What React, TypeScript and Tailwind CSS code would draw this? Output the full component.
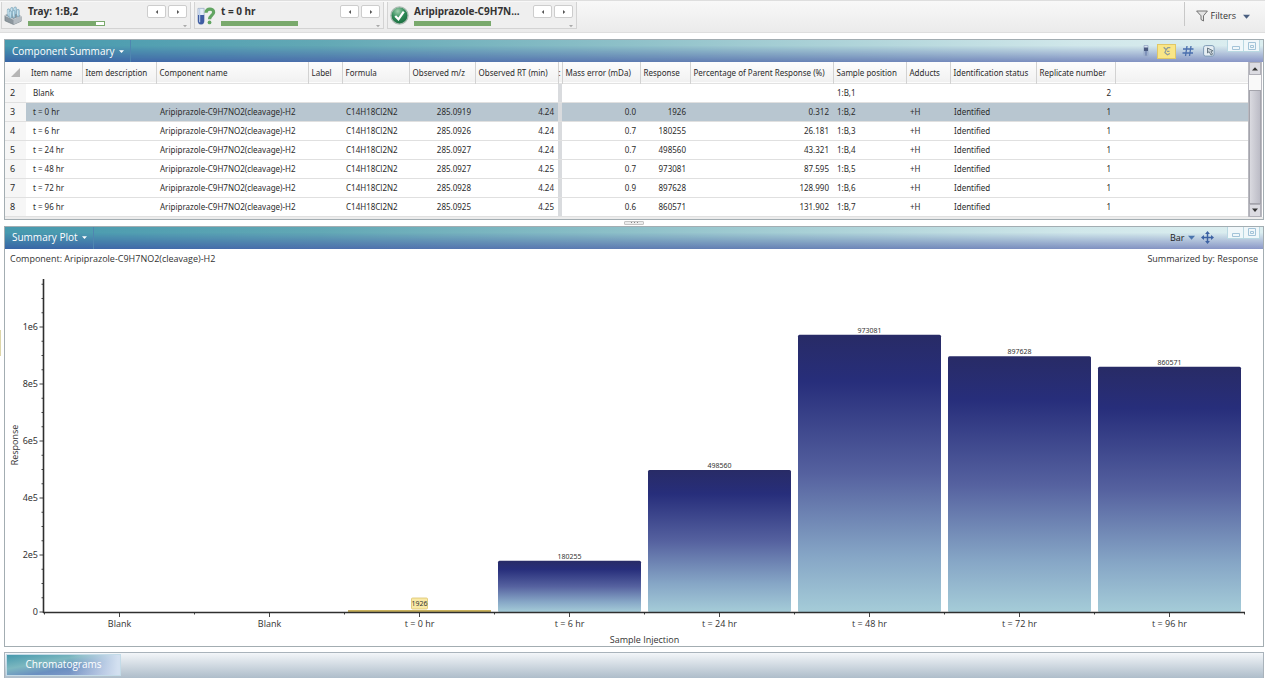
import type { ReactNode } from "react";

const CELL = "overflow-visible whitespace-nowrap";

type Column = { label: string; width: string; align?: "right" };

const COLUMNS: Column[] = [
  { label: "Item name", width: "w-[56px]" },
  { label: "Item description", width: "w-[74px]" },
  { label: "Component name", width: "w-[152px]" },
  { label: "Label", width: "w-[34px]" },
  { label: "Formula", width: "w-[67px]" },
  { label: "Observed m/z", width: "w-[66px]", align: "right" },
  { label: "Observed RT (min)", width: "w-[83px]", align: "right" },
  { label: "", width: "w-[4px]" },
  { label: "Mass error (mDa)", width: "w-[78px]", align: "right" },
  { label: "Response", width: "w-[50px]", align: "right" },
  { label: "Percentage of Parent Response (%)", width: "w-[143px]", align: "right" },
  { label: "Sample position", width: "w-[73px]" },
  { label: "Adducts", width: "w-[44px]" },
  { label: "Identification status", width: "w-[86px]" },
  { label: "Replicate number", width: "w-[79px]", align: "right" },
];

const COMPONENT = "Aripiprazole-C9H7NO2(cleavage)-H2";
const FORMULA = "C14H18Cl2N2";

const found = (item: string, mz: string, rt: string, err: string, resp: string, pct: string, pos: string) => [
  item, "", COMPONENT, "", FORMULA, mz, rt, "", err, resp, pct, pos, "+H", "Identified", "1",
];

const ROWS = [
  { id: 2, cells: ["Blank", "", "", "", "", "", "", "", "", "", "", "1:B,1", "", "", "2"] },
  { id: 3, selected: true, cells: found("t = 0 hr", "285.0919", "4.24", "0.0", "1926", "0.312", "1:B,2") },
  { id: 4, cells: found("t = 6 hr", "285.0926", "4.24", "0.7", "180255", "26.181", "1:B,3") },
  { id: 5, cells: found("t = 24 hr", "285.0927", "4.24", "0.7", "498560", "43.321", "1:B,4") },
  { id: 6, cells: found("t = 48 hr", "285.0927", "4.25", "0.7", "973081", "87.595", "1:B,5") },
  { id: 7, cells: found("t = 72 hr", "285.0928", "4.24", "0.9", "897628", "128.990", "1:B,6") },
  { id: 8, cells: found("t = 96 hr", "285.0925", "4.25", "0.6", "860571", "131.902", "1:B,7") },
];

const BARS = [
  { label: "Blank", value: 0 },
  { label: "Blank", value: 0 },
  { label: "t = 0 hr", value: 1926 },
  { label: "t = 6 hr", value: 180255 },
  { label: "t = 24 hr", value: 498560 },
  { label: "t = 48 hr", value: 973081 },
  { label: "t = 72 hr", value: 897628 },
  { label: "t = 96 hr", value: 860571 },
];

function TrayIcon() {
  return (
    <svg viewBox="0 0 20 20" className="size-[19px] shrink-0" aria-hidden="true">
      <path d="M1 10 9 7l9 4v5l-8 3.500L1 15.500z" fill="#8d979e" stroke="#6d787f" strokeWidth=".7" />
      <path d="M1 10l9 4 8-3" fill="none" stroke="#d4dade" strokeWidth="1" />
      <path d="M10 14v5.500l8-3.500v-5z" fill="#b4bcc2" />
      {[[3.5, 3], [7, 1.5], [10.5, 1], [13.5, 3.5], [9, 4.5], [5.5, 5]].map(([x, y]) => (
        <g key={`${x}-${y}`}>
          <rect x={x} y={y} width="2.600" height="8" rx="1.200" fill="#a9d0e2" stroke="#6b93a8" strokeWidth=".5" />
          <path d={`M${x + 0.8} ${y + 1.2}v5`} stroke="#e8f5fa" strokeWidth=".7" />
        </g>
      ))}
    </svg>
  );
}

function VialIcon() {
  return (
    <svg viewBox="0 0 20 20" className="size-[19px] shrink-0" aria-hidden="true">
      <path d="M1 2.500h6.500V16a3.200 3.200 0 0 1-6.500 0z" fill="#e3ecf6" stroke="#9dadc6" strokeWidth=".8" />
      <path d="M1 9.500h6.500V16a3.200 3.200 0 0 1-6.500 0z" fill="#3f5ca3" />
      <path d="M2.800 3v14" fill="none" stroke="#b9cdea" strokeWidth="1.200" />
      <path d="M9.500 7C9.500 2 17.500 2 17.500 6.500c0 3.300-4.300 3.500-4.300 7.500" fill="none" stroke="#62a562" strokeWidth="3.400" />
      <circle cx="13.200" cy="17.300" r="2" fill="#62a562" />
    </svg>
  );
}

function CheckIcon() {
  return (
    <svg viewBox="0 0 20 20" className="size-[19px] shrink-0" aria-hidden="true">
      <defs>
        <radialGradient id="check-fill" cx=".4" cy=".25" r=".8">
          <stop offset="0" stopColor="#9fd0ae" />
          <stop offset=".5" stopColor="#2f8a57" />
          <stop offset="1" stopColor="#176a3c" />
        </radialGradient>
      </defs>
      <circle cx="10" cy="10" r="9" fill="url(#check-fill)" stroke="#a9bab0" strokeWidth="1.400" />
      <path d="M5.500 10.500l3.400 3.500L14.500 6" fill="none" stroke="#fff" strokeWidth="2.400" />
    </svg>
  );
}

function Caret({ className, dir = "down" }: { className: string; dir?: "down" | "up" | "left" | "right" }) {
  const shapes = { down: "M0 2h8l-4 4.500z", up: "M0 6h8L4 1.500z", left: "M6 0v8L1.500 4z", right: "M2 0v8l4.500-4z" };
  return (
    <svg viewBox="0 0 8 8" className={className} fill="currentColor" aria-hidden="true">
      <path d={shapes[dir]} />
    </svg>
  );
}

function Stepper({ icon, title, filled }: { icon: ReactNode; title: string; filled: string }) {
  return (
    <section className="flex h-[27px] w-[190px] items-start border border-t-0 border-[#d3d3d3] bg-[#efefef] pr-[3px] pl-[2px]">
      <div className="pt-[4px]">{icon}</div>
      <div className="ml-[5px] flex min-w-0 flex-1 flex-col">
        <h2 className="h-[19px] text-[10px] leading-[19px] font-bold whitespace-nowrap text-[#333]">{title}</h2>
        <div className="h-[5px] w-[77px] border border-[#79a96c] bg-white">
          <div className={`h-full bg-[#79a96c] ${filled}`} />
        </div>
      </div>
      <div className="flex flex-col items-end">
        <div className="flex gap-[2px] pt-[3px]">
          {(["left", "right"] as const).map((dir) => (
            <button
              key={dir}
              type="button"
              aria-label={dir === "left" ? "Previous" : "Next"}
              className="flex h-[13px] w-[19px] items-center justify-center rounded-[2px] border border-[#cdcdcd] bg-white text-[#555]"
            >
              <Caret dir={dir} className="size-[4px]" />
            </button>
          ))}
        </div>
        <Caret className="mt-[6px] size-[4px] text-[#aaa]" />
      </div>
    </section>
  );
}

function WindowButtons() {
  return (
    <div className="mr-[3px] flex self-start text-[#a3c3d8]">
      <button type="button" aria-label="Minimize" className="flex h-[12px] w-[17px] items-end justify-center border border-t-0 border-[#b9d8e2] bg-[#f0f7fa]">
        <svg viewBox="0 0 8 8" className="size-[8px]" fill="none" stroke="currentColor" aria-hidden="true">
          <path d="M.5 3.500h7v3h-7z" />
        </svg>
      </button>
      <button type="button" aria-label="Maximize" className="flex h-[12px] w-[16px] items-center justify-center border border-t-0 border-l-0 border-[#b9d8e2] bg-[#f0f7fa]">
        <svg viewBox="0 0 8 8" className="size-[8px]" fill="none" stroke="currentColor" aria-hidden="true">
          <path d="M.5.5h7v7h-7zM2.500 3.500h3v2h-3z" />
        </svg>
      </button>
    </div>
  );
}

function PanelHeader({ title, children }: { title: string; children: ReactNode }) {
  return (
    <header className="relative isolate flex h-[22px] items-center bg-[linear-gradient(to_right,#3865a6,#4c6fac_25%,#6580b4_60%,#8c99c8)] before:absolute before:inset-0 before:-z-10 before:bg-[linear-gradient(to_right,#4699ae,#62a8b5_25%,#8fc1c9_50%,#d0e7ea_85%,#dceef0)] before:[mask-image:linear-gradient(to_bottom,black_25%,transparent)]">
      <button type="button" className="flex h-full items-center gap-[4px] border-r border-[#4f86b0] pr-[6px] pl-[7px] font-['Open_Sans',sans-serif] text-[10px] text-white">
        {title}
        <Caret className="size-[5px]" />
      </button>
      <div className="ml-auto flex h-full items-center">
        {children}
        <WindowButtons />
      </div>
    </header>
  );
}

function ComponentTools() {
  return (
    <div className="mr-[8px] flex items-center gap-[2px]">
      <button type="button" aria-label="Sample" className="flex size-[18px] items-center justify-center">
        <svg viewBox="0 0 12 12" className="size-[12px]" aria-hidden="true">
          <path d="M4 .5h4v9a2 2 0 0 1-4 0z" fill="#d8e2f0" stroke="#8fa1c2" strokeWidth=".7" />
          <path d="M4 2.500h4V6H4z" fill="#4a5a80" />
          <path d="M4.500 6h3v3.500a1.500 1.500 0 0 1-3 0z" fill="#7f93ba" />
        </svg>
      </button>
      <button type="button" aria-label="Components" className="flex h-[15px] w-[19px] items-center justify-center border border-[#e0c766] bg-[#f9e686]">
        <svg viewBox="0 0 12 12" className="size-[10px]" fill="none" stroke="#8e9c9c" strokeWidth="1.500" aria-hidden="true">
          <path d="M2 1.500l3 3 2-2.500h3M5 4.500L3.500 8l3 2.500L9.500 9M6 6.500h3" />
        </svg>
      </button>
      <button type="button" aria-label="Numbering" className="flex size-[19px] items-center justify-center">
        <svg viewBox="0 0 12 12" className="size-[12px]" fill="none" stroke="#4a6fae" strokeWidth="1.300" aria-hidden="true">
          <path d="M5 1L3.500 11M9 1L7.500 11M1 4h10.500M.5 8H11" />
        </svg>
      </button>
      <button type="button" aria-label="Export" className="flex size-[20px] items-center justify-center">
        <svg viewBox="0 0 12 12" className="size-[12px]" aria-hidden="true">
          <rect x=".6" y=".6" width="10.500" height="10.500" rx="2" fill="#e6eef3" stroke="#7d9ab5" />
          <path d="M4.500 3v5l1.600-1.400L8 10l1.600-.8L8 6.400l2-.6z" fill="#cdd6dc" stroke="#5f6f7c" strokeWidth=".9" />
        </svg>
      </button>
    </div>
  );
}

function ResultsTable() {
  return (
    <table className="w-full flex-1 table-fixed border-collapse text-[8px] text-[#2b2b2b]">
      <colgroup>
        <col className="w-[21px]" />
        {COLUMNS.map((c, i) => (
          <col key={i} className={c.width} />
        ))}
        <col />
      </colgroup>
      <thead>
        <tr className="h-[21px] border-b border-[#e2e2e2] bg-linear-to-b from-[#fdfdfd] to-[#f1f1f1]">
          <th aria-label="Row">
            <svg viewBox="0 0 8 8" className="ml-[6px] size-[9px]" fill="#b5b5b5" aria-hidden="true">
              <path d="M8 0v8H0z" />
            </svg>
          </th>
          {COLUMNS.map((c, i) => (
            <th
              key={i}
              className={`${CELL} border-r border-[#d2d2d2] p-0 pt-[2px] text-left font-normal ${
                i === 0 ? "pl-[5px]" : c.label ? "pl-[3px]" : "text-center"
              }`}
            >
              {c.label || ":"}
            </th>
          ))}
          <th />
        </tr>
      </thead>
      <tbody>
        {ROWS.map((r) => (
          <tr key={r.id} className={`h-[19px] border-b border-[#e0e0e0] ${r.selected ? "bg-[#b8c6d0]" : "bg-white"}`}>
            <th scope="row" className="bg-[#f6f6f6] p-0 pl-[5px] text-left text-[9px] font-normal">
              {r.id}
            </th>
            {r.cells.map((v, i) => (
              <td
                key={i}
                className={`${CELL} p-0 ${
                  i === 7 ? "bg-[#d9dbde]" : i === 0 ? "pl-[7px]" : COLUMNS[i].align ? "pr-[4px] text-right" : "pl-[4px]"
                }`}
              >
                {v}
              </td>
            ))}
            <td />
          </tr>
        ))}
      </tbody>
    </table>
  );
}

function ScrollTrack() {
  return (
    <div className="flex w-[14px] flex-col border-x border-[#b9b9c0] bg-[#f9f9f9]">
      <button type="button" aria-label="Scroll up" className="flex h-[13px] items-center justify-center border border-[#b0b0b8] bg-[#dcdce2] text-[#333]">
        <Caret dir="up" className="size-[6px]" />
      </button>
      <div className="h-[15px]" />
      <div className="flex-1 border border-[#a4a4ac] bg-linear-to-r from-[#dadae0] to-[#bcbcc6]" />
      <button type="button" aria-label="Scroll down" className="flex h-[13px] items-center justify-center border border-[#b0b0b8] bg-[#dcdce2] text-[#333]">
        <Caret className="size-[6px]" />
      </button>
    </div>
  );
}

const AXIS_X = 39;
const BASE_Y = 345;
const STEP = 150;
const BAR_W = 143;
const UNIT = 285 / 1e6;

function BarChart() {
  return (
    <svg viewBox="0 0 1258 379" className="block w-full" role="img" aria-label="Response by sample injection">
      <defs>
        <linearGradient id="bar-fill" x1="0" y1="0" x2="0" y2="1">
          <stop offset="0" stopColor="#282b66" />
          <stop offset=".17" stopColor="#272e7b" />
          <stop offset=".5" stopColor="#55619f" />
          <stop offset=".8" stopColor="#86a6c6" />
          <stop offset="1" stopColor="#a5ccd8" />
        </linearGradient>
      </defs>
      <g className="text-[7px]" fill="#333" textAnchor="middle">
        {BARS.map((b, i) => {
          if (!b.value) return null;
          const cx = AXIS_X + 0.5 + (i + 0.5) * STEP;
          const x = cx - BAR_W / 2;
          const y = BASE_Y - b.value * UNIT;
          if (i === 2) {
            return (
              <g key={i}>
                <rect x={x} y={BASE_Y - 2} width={BAR_W} height="2" fill="#c9b25c" />
                <rect x={cx - 8} y={BASE_Y - 14} width="16" height="11" rx="1" fill="#f9e9a6" stroke="#dcc36c" strokeWidth=".8" />
                <text x={cx} y={BASE_Y - 6}>{b.value}</text>
              </g>
            );
          }
          return (
            <g key={i}>
              <rect x={x} y={y} width={BAR_W} height={BASE_Y - y} rx="1.500" fill="url(#bar-fill)" />
              <text x={cx} y={y - 2}>{b.value}</text>
            </g>
          );
        })}
      </g>
      <g stroke="#2f2f2f">
        <path d={`M${AXIS_X - 0.5} 12V${BASE_Y + 1}`} strokeWidth="1.600" />
        <path d={`M${AXIS_X - 1} ${BASE_Y + 0.5}H${AXIS_X + 8 * STEP + 1}`} strokeWidth="1.500" />
        {Array.from({ length: 24 }, (_, i) => {
          const y = BASE_Y - i * 14.25;
          return <path key={i} d={`M${AXIS_X - (i % 4 ? 2.5 : 4.5)} ${y}H${AXIS_X}`} strokeWidth=".9" />;
        })}
        {Array.from({ length: 17 }, (_, i) => (
          <path key={i} d={`M${AXIS_X + 0.5 + i * 75} ${BASE_Y}v${i % 2 ? 5 : 2.5}`} strokeWidth=".9" />
        ))}
      </g>
      <g className="text-[9px]" fill="#333">
        <g textAnchor="end">
          {["0", "2e5", "4e5", "6e5", "8e5", "1e6"].map((t, i) => (
            <text key={t} x={AXIS_X - 6} y={BASE_Y - i * 57 + 3}>{t}</text>
          ))}
        </g>
        <g textAnchor="middle" className="font-['Open_Sans',sans-serif]">
          {BARS.map((b, i) => (
            <text key={i} x={AXIS_X + 0.5 + (i + 0.5) * STEP} y={BASE_Y + 15}>{b.label}</text>
          ))}
          <text x={AXIS_X + 0.5 + 4 * STEP} y={BASE_Y + 31}>Sample Injection</text>
          <text transform="translate(13 178) rotate(-90)">Response</text>
        </g>
      </g>
    </svg>
  );
}

export default function App() {
  return (
    <div className="relative flex min-h-screen flex-col bg-white font-['Noto_Sans','Open_Sans',sans-serif] text-[#333]">
      <div className="absolute top-[330px] left-0 h-[26px] w-px bg-[#ddd6a8]" />
      <div className="flex h-[33px] items-start border-t border-b border-[#dedede] bg-linear-to-b from-[#f8f8f8] to-[#ebebeb] pt-px">
        <div className="flex gap-[3px] pl-px">
          <Stepper icon={<TrayIcon />} title="Tray: 1:B,2" filled="w-[67px]" />
          <Stepper icon={<VialIcon />} title="t = 0 hr" filled="w-full" />
          <Stepper icon={<CheckIcon />} title="Aripiprazole-C9H7N..." filled="w-full" />
        </div>
        <div className="ml-auto flex h-[24px] items-center border-l border-[#c8c8c8] pt-[4px] pr-[15px] pl-[11px]">
          <button type="button" className="flex items-center gap-[3px] font-['Open_Sans',sans-serif] text-[9px]">
            <svg viewBox="0 0 12 12" className="size-[12px]" fill="#e4e4e4" stroke="#666" strokeWidth=".9" aria-hidden="true">
              <path d="M.6 1h10.800L7.500 5.800V11L5 9.500V5.800z" />
            </svg>
            Filters
            <Caret className="ml-[4px] size-[7px] text-[#4a5f80]" />
          </button>
        </div>
      </div>

      <main className="flex flex-1 flex-col pt-[6px] pr-px pl-[4px]">
        <section className="border border-[#a3adb2]">
          <PanelHeader title="Component Summary">
            <ComponentTools />
          </PanelHeader>
          <div className="flex pr-px">
            <ResultsTable />
            <ScrollTrack />
          </div>
          <div className="h-[2px] bg-[#ececec]" />
        </section>

        <div className="flex h-[6px] items-center justify-center">
          <div className="flex h-[4px] w-[20px] items-center justify-center gap-[2px] rounded-[1px] border border-[#c4c4c4] bg-[#ececec]">
            <i className="size-px bg-[#888]" />
            <i className="size-px bg-[#888]" />
            <i className="size-px bg-[#888]" />
          </div>
        </div>

        <section className="border border-[#a3adb2]">
          <PanelHeader title="Summary Plot">
            <div className="mr-[13px] flex items-center font-['Open_Sans',sans-serif] text-[9px] text-[#222]">
              <select aria-label="Plot type" className="h-[20px] w-[18px] appearance-none bg-transparent p-0 leading-[18px]">
                <option>Bar</option>
              </select>
              <Caret className="size-[7px] text-[#4a74ad]" />
              <svg viewBox="0 0 14 14" className="ml-[6px] size-[13px]" fill="#3d62a3" aria-hidden="true">
                <path d="M7 0l2.600 3.200H7.800v3h3V4.400L14 7l-3.200 2.600V7.800h-3v3h1.800L7 14l-2.600-3.200h1.800v-3h-3v1.800L0 7l3.200-2.600v1.800h3v-3H4.400z" />
              </svg>
            </div>
          </PanelHeader>
          <div className="flex h-[18px] items-center justify-between px-[5px] pt-[2px] font-['Open_Sans',sans-serif] text-[9px]">
            <p>Component: {COMPONENT}</p>
            <p>Summarized by: Response</p>
          </div>
          <BarChart />
        </section>

        <footer className="mt-[5px] flex h-[27px] items-start border border-[#a9b3bb] bg-linear-to-b from-[#f3f6f9] to-[#aebdca] p-px">
          <button type="button" className="flex h-[22px] w-[115px] items-center justify-center border border-[#c3dbe8] bg-[linear-gradient(to_right,transparent_55%,#d3e0f0_98%),linear-gradient(to_bottom_right,#4598ac,#7db8c0_35%,#6a8fc0_60%,#8f9fd0)] font-['Open_Sans',sans-serif] text-[10px] text-white">
            Chromatograms
          </button>
        </footer>
      </main>
    </div>
  );
}
